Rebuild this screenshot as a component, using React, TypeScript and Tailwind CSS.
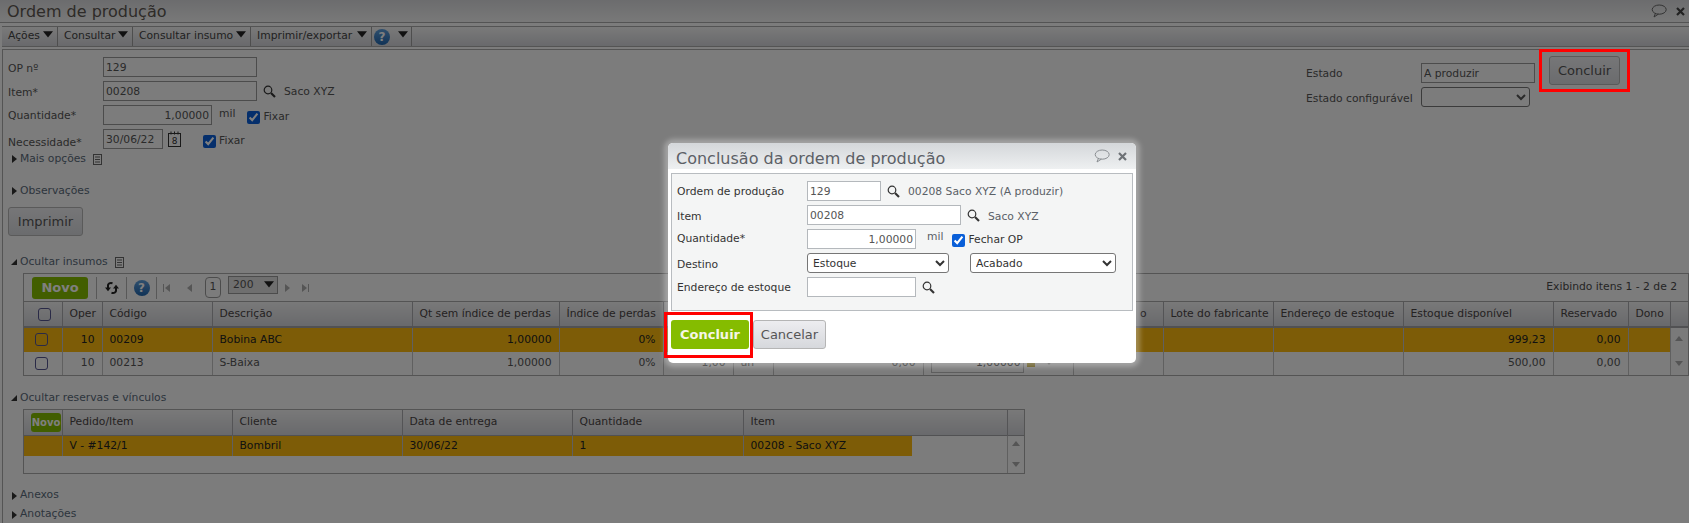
import React from 'react'

const SearchIcon = ({ cls = 'text-[#333]' }: { cls?: string }) => (
  <svg width="13" height="13" viewBox="0 0 13 13" className={cls} fill="none" stroke="currentColor">
    <circle cx="5" cy="5" r="3.8" strokeWidth="1.2" />
    <path d="M8 8l4 4" strokeWidth="2.2" />
  </svg>
)

const Caret = ({ dir = 'down', cls = 'text-[#444]', s = 8 }: { dir?: string; cls?: string; s?: number }) => {
  const d = dir === 'down' ? 'M0 1h8L4 6z' : dir === 'right' ? 'M2 0l5 4-5 4z' : dir === 'left' ? 'M6 0L1 4l5 4z' : dir === 'up' ? 'M0 6h8L4 1z' : 'M7 1v6H1z'
  return (
    <svg width={s} height={s} viewBox="0 0 8 8" className={`shrink-0 ${cls}`} fill="currentColor">
      <path d={d} />
    </svg>
  )
}

const HelpIcon = () => (
  <span className="flex h-[16px] w-[16px] shrink-0 items-center justify-center rounded-full bg-gradient-to-b from-[#5f9fdc] to-[#1f66ad] text-[12px] font-bold leading-none text-white">?</span>
)

const DocIcon = () => (
  <svg width="9" height="11" viewBox="0 0 9 11" className="text-[#666]" fill="none" stroke="currentColor">
    <rect x="0.5" y="0.5" width="8" height="10" />
    <path d="M2 3h5M2 5.5h5M2 8h5" />
  </svg>
)

const ChatIcon = ({ cls }: { cls: string }) => (
  <svg width="16" height="14" viewBox="0 0 16 14" className={cls} fill="none" stroke="currentColor">
    <ellipse cx="8.2" cy="5.6" rx="7" ry="4.6" />
    <path d="M4.5 9.2L3 13l4.4-2.9" />
  </svg>
)

const CloseIcon = ({ cls }: { cls: string }) => (
  <svg width="9" height="9" viewBox="0 0 9 9" className={cls} fill="none" stroke="currentColor" strokeWidth="2.2">
    <path d="M1 1l7 7M8 1L1 8" />
  </svg>
)

const CalendarIcon = () => (
  <svg width="13" height="16" viewBox="0 0 13 16" className="text-[#333]" fill="none" stroke="currentColor">
    <rect x="0.5" y="2.5" width="12" height="13" />
    <path d="M3 0.5v3M6.5 0.5v3M10 0.5v3" />
    <text x="6.5" y="13" fontSize="9" textAnchor="middle" fill="currentColor" stroke="none">8</text>
  </svg>
)

const SyncIcon = () => (
  <svg width="16" height="14" viewBox="0 0 16 14" className="text-[#222]" fill="none" stroke="currentColor" strokeWidth="2">
    <path d="M4 3.5v3.5M8.5 2.2C6 1.4 4 2.5 4 4.5" />
    <path d="M12 10.5V7M7.5 11.8c2.5.8 4.5-.3 4.5-2.3" />
    <path d="M1 6.5h6L4 10.2zM9 7.5h6L12 3.8z" fill="currentColor" stroke="none" />
  </svg>
)

const Fixar = ({ label = 'Fixar' }: { label?: string }) => (
  <label className="flex items-center gap-[3px]">
    <input type="checkbox" defaultChecked className="m-0 h-[13px] w-[13px] accent-[#0a5fd8]" />
    <span>{label}</span>
  </label>
)

const Section = ({ label, open, doc, cls = '' }: { label: string; open?: boolean; doc?: boolean; cls?: string }) => (
  <div className={`flex h-[14px] items-center ${cls}`}>
    <Caret dir={open ? 'open' : 'right'} cls="text-[#333]" />
    <span className="ml-[2px] text-[#5a6a7a]">{label}</span>
    {doc && <span className="ml-[7px] flex"><DocIcon /></span>}
  </div>
)

const FormRow = ({ label, labelCls, children }: { label: string; labelCls: string; children: React.ReactNode }) => (
  <div className="flex h-[20px] items-center">
    <span className={`w-[95px] shrink-0 ${labelCls}`}>{label}</span>
    {children}
  </div>
)

const inputCls = 'h-[20px] border border-[#999] bg-transparent px-[2px] text-[10.75px] leading-none text-[#555] outline-none'
const modalInput = 'h-[20px] border border-[#b4b8bc] bg-white px-[2px] text-[10.75px] leading-none text-[#555] outline-none'
const greyBtn = 'flex items-center justify-center rounded-[3px] border border-[#b5b5b5] bg-gradient-to-b from-[#ededf0] to-[#d6d8dc] text-[13px] text-[#555]'
const thCls = 'h-[25px] border-r border-[#a9a9ad] bg-gradient-to-b from-[#f2f2f2] to-[#d2d3d8] px-[7px] text-left font-normal whitespace-nowrap text-[#4a4444]'
const tdCls = 'border-r border-[#c0c0c0] px-[7px] whitespace-nowrap'

const tableCheck = 'm-0 block h-[13px] w-[13px] appearance-none rounded-[3px] border border-[#55558f] bg-transparent'

function MenuItem({ label, w }: { label: string; w: string }) {
  return (
    <div className={`flex h-full items-center justify-between border-r border-[#9c9c9c] pl-[6px] pr-[4px] ${w}`}>
      <span>{label}</span>
      <span className="-mt-[4px] flex"><Caret cls="text-[#222]" s={10} /></span>
    </div>
  )
}

function InsumosTable() {
  return (
    <div className="ml-[20px] border border-[#a8a8a8]">
      <div className="flex h-[28px] items-center justify-between border-b border-[#a8a8a8] pr-[11px]">
        <div className="flex h-full items-center">
          <div className="ml-[8px] flex h-[22px] w-[56px] items-center justify-center rounded-[3px] bg-[#85bc00] text-[13px] font-bold text-white">Novo</div>
          <span className="ml-[8px] h-[22px] w-px bg-[#b0b0b0]" />
          <span className="flex w-[29px] justify-center"><SyncIcon /></span>
          <span className="h-[22px] w-px bg-[#b0b0b0]" />
          <span className="flex w-[29px] justify-center"><HelpIcon /></span>
          <span className="h-[22px] w-px bg-[#b0b0b0]" />
          <span className="ml-[6px] flex w-[18px] items-center"><span className="h-[8px] w-[1px] bg-[#aaa]" /><Caret dir="left" cls="text-[#aaa]" /></span>
          <span className="ml-[5px]"><Caret dir="left" cls="text-[#aaa]" /></span>
          <span className="ml-[11px] flex h-[21px] w-[16px] items-center justify-center rounded-[4px] border border-[#999]">1</span>
          <div className="ml-[7px] mt-[2px] flex h-[18px] w-[50px] items-center justify-between self-start border border-[#999] bg-[#dedede] pl-[4px] pr-[3px]">
            <span>200</span>
            <Caret cls="text-[#222]" s={10} />
          </div>
          <span className="ml-[5px]"><Caret dir="right" cls="text-[#aaa]" /></span>
          <span className="ml-[9px] flex items-center"><Caret dir="right" cls="text-[#aaa]" /><span className="h-[8px] w-[1px] bg-[#aaa]" /></span>
        </div>
        <span className="text-[#4a4a4a]">Exibindo itens 1 - 2 de 2</span>
      </div>
      <table className="w-full table-fixed">
        <colgroup>
          <col className="w-[38px]" /><col className="w-[40px]" /><col className="w-[110px]" /><col className="w-[200px]" /><col className="w-[147px]" />
          <col className="w-[104px]" /><col className="w-[70px]" /><col className="w-[40px]" /><col className="w-[150px]" /><col className="w-[150px]" />
          <col className="w-[90px]" /><col className="w-[110px]" /><col className="w-[130px]" /><col className="w-[150px]" /><col className="w-[75px]" />
          <col className="w-[42px]" /><col />
        </colgroup>
        <thead>
          <tr className="border-b-2 border-[#a2a2a6]">
            <th className={thCls}><input type="checkbox" className={`${tableCheck} ml-[7px]`} /></th>
            <th className={thCls}>Oper</th>
            <th className={thCls}>Código</th>
            <th className={thCls}>Descrição</th>
            <th className={thCls}>Qt sem índice de perdas</th>
            <th className={thCls}>Índice de perdas</th>
            <th className={thCls} />
            <th className={thCls} />
            <th className={thCls} />
            <th className={thCls} />
            <th className={`${thCls} pr-[16px] text-right`}>o</th>
            <th className={thCls}>Lote do fabricante</th>
            <th className={thCls}>Endereço de estoque</th>
            <th className={thCls}>Estoque disponível</th>
            <th className={thCls}>Reservado</th>
            <th className={thCls}>Dono</th>
            <th className={`${thCls} border-r-0`} />
          </tr>
        </thead>
        <tbody>
          <tr className="h-[24px] bg-[#fab90e] text-[#222]">
            <td className={tdCls}><input type="checkbox" className={`${tableCheck} ml-[4px]`} /></td>
            <td className={`${tdCls} text-right`}>10</td>
            <td className={tdCls}>00209</td>
            <td className={tdCls}>Bobina ABC</td>
            <td className={`${tdCls} text-right`}>1,00000</td>
            <td className={`${tdCls} text-right`}>0%</td>
            <td className={tdCls} />
            <td className={tdCls} />
            <td className={tdCls} />
            <td className={tdCls} />
            <td className={tdCls} />
            <td className={tdCls} />
            <td className={tdCls} />
            <td className={`${tdCls} text-right`}>999,23</td>
            <td className={`${tdCls} text-right`}>0,00</td>
            <td className={tdCls} />
            <td rowSpan={2} className="bg-[#f4f4f4] align-top">
              <div className="flex h-[47px] flex-col items-center justify-between py-[7px]">
                <Caret dir="up" cls="text-[#aaa]" />
                <Caret cls="text-[#aaa]" />
              </div>
            </td>
          </tr>
          <tr className="h-[23px] text-[#555]">
            <td className={tdCls}><input type="checkbox" className={`${tableCheck} ml-[4px]`} /></td>
            <td className={`${tdCls} text-right`}>10</td>
            <td className={tdCls}>00213</td>
            <td className={tdCls}>S-Baixa</td>
            <td className={`${tdCls} text-right`}>1,00000</td>
            <td className={`${tdCls} text-right`}>0%</td>
            <td className={`${tdCls} text-right`}>1,00</td>
            <td className={tdCls}>un</td>
            <td className={`${tdCls} text-right`}>0,00</td>
            <td className={tdCls}>
              <div className="flex items-center gap-[3px]">
                <span className="flex h-[19px] w-[93px] items-center justify-end border border-[#bbb] pr-[2px] text-[#222]">1,00000</span>
                <span className="h-[7px] w-[8px] rounded-t-full bg-[#b8a030]" />
                <span className="ml-[7px]"><Caret cls="text-[#aaa]" /></span>
              </div>
            </td>
            <td className={tdCls} />
            <td className={tdCls} />
            <td className={tdCls} />
            <td className={`${tdCls} text-right`}>500,00</td>
            <td className={`${tdCls} text-right`}>0,00</td>
            <td className={tdCls} />
          </tr>
        </tbody>
      </table>
    </div>
  )
}

function ReservasTable() {
  return (
    <div className="ml-[20px] w-[1002px] border border-[#a8a8a8]">
      <table className="w-full table-fixed">
        <colgroup>
          <col className="w-[38px]" /><col className="w-[170px]" /><col className="w-[170px]" /><col className="w-[170px]" /><col className="w-[171px]" />
          <col className="w-[169px]" /><col className="w-[95px]" /><col />
        </colgroup>
        <thead>
          <tr className="border-b border-[#a2a2a6]">
            <th className={`${thCls} px-0`}>
              <div className="mx-auto flex h-[19px] w-[30px] items-center justify-center rounded-[3px] bg-[#85bc00] text-[10px] font-bold text-white">Novo</div>
            </th>
            <th className={thCls}>Pedido/Item</th>
            <th className={thCls}>Cliente</th>
            <th className={thCls}>Data de entrega</th>
            <th className={thCls}>Quantidade</th>
            <th colSpan={2} className={thCls}>Item</th>
            <th className={`${thCls} border-r-0`} />
          </tr>
        </thead>
        <tbody>
          <tr className="h-[21px] text-[#222]">
            <td className={`${tdCls} bg-[#fab90e]`} />
            <td className={`${tdCls} bg-[#fab90e]`}>V - #142/1</td>
            <td className={`${tdCls} bg-[#fab90e]`}>Bombril</td>
            <td className={`${tdCls} bg-[#fab90e]`}>30/06/22</td>
            <td className={`${tdCls} bg-[#fab90e]`}>1</td>
            <td className="bg-[#fab90e] px-[7px] whitespace-nowrap">00208 - Saco XYZ</td>
            <td />
            <td rowSpan={2} className="border-l border-[#c0c0c0] align-top">
              <div className="flex h-[37px] flex-col items-center justify-between py-[4px]">
                <Caret dir="up" cls="text-[#aaa]" />
                <Caret cls="text-[#aaa]" />
              </div>
            </td>
          </tr>
          <tr className="h-[16px]">
            <td colSpan={7} />
          </tr>
        </tbody>
      </table>
    </div>
  )
}

function ConclusaoModal() {
  return (
    <div className="absolute left-[668px] top-[143px] z-30 h-[220px] w-[468px] rounded-[5px] bg-white shadow-[0_0_5px_4px_rgba(255,255,255,0.3)]">
      <div className="flex h-[26px] items-center justify-between rounded-t-[5px] bg-gradient-to-b from-[#d4d7da] to-[#eef0f1] pl-[8px] pr-[9px]">
        <span className="translate-y-[3px] text-[16px] text-[#5c6066]">Conclusão da ordem de produção</span>
        <div className="flex items-center gap-[8px]">
          <ChatIcon cls="text-[#8a8e92]" />
          <CloseIcon cls="text-[#6e7276]" />
        </div>
      </div>
      <div className="mx-[3px] mt-[4px] flex h-[138px] flex-col gap-[4px] border border-[#b8bcc0] bg-[#f4f5f5] pl-[5px] pt-[7px] text-[#333]">
        <div className="flex h-[20px] items-center">
          <span className="w-[130px] shrink-0 translate-y-[1px]">Ordem de produção</span>
          <input readOnly value="129" className={`${modalInput} w-[74px]`} />
          <span className="ml-[6px] flex"><SearchIcon /></span>
          <span className="ml-[8px] translate-y-[1px] text-[#5a6066]">00208 Saco XYZ (A produzir)</span>
        </div>
        <div className="flex h-[20px] items-center">
          <span className="w-[130px] shrink-0 translate-y-[2px]">Item</span>
          <input readOnly value="00208" className={`${modalInput} w-[154px]`} />
          <span className="ml-[6px] flex"><SearchIcon /></span>
          <span className="ml-[8px] translate-y-[2px] text-[#5a6066]">Saco XYZ</span>
        </div>
        <div className="flex h-[20px] items-center">
          <span className="w-[130px] shrink-0">Quantidade*</span>
          <input readOnly value="1,00000" className={`${modalInput} w-[109px] text-right text-[#333]`} />
          <span className="ml-[11px] -mt-[4px] text-[#5a6066]">mil</span>
          <span className="ml-[9px] translate-y-[1px]"><Fixar label="Fechar OP" /></span>
        </div>
        <div className="flex h-[20px] items-center">
          <span className="w-[130px] shrink-0 translate-y-[2px]">Destino</span>
          <select className="h-[20px] w-[142px] rounded-[3px] border border-[#767676] bg-white pl-[1px] text-[10.75px] text-[#333]"><option>Estoque</option></select>
          <select className="ml-[21px] h-[20px] w-[146px] rounded-[3px] border border-[#767676] bg-white pl-[1px] text-[10.75px] text-[#333]"><option>Acabado</option></select>
        </div>
        <div className="flex h-[20px] items-center">
          <span className="w-[130px] shrink-0 translate-y-[1px]">Endereço de estoque</span>
          <input readOnly className={`${modalInput} w-[109px]`} />
          <span className="ml-[6px] flex"><SearchIcon /></span>
        </div>
      </div>
      <div className="ml-[3px] mt-[9px] flex gap-[4px]">
        <div className="relative">
          <div className="flex h-[29px] w-[78px] items-center justify-center rounded-[3px] bg-[#85bc00] text-[13px] font-bold text-[#f6f6e6]">Concluir</div>
          <span className="absolute -bottom-[9px] -left-[7px] -right-[4px] -top-[8px] border-[3px] border-[#ff0000]" />
        </div>
        <div className={`${greyBtn} h-[29px] w-[73px]`}>Cancelar</div>
      </div>
    </div>
  )
}

export default function App() {
  return (
    <div className="relative h-[523px] w-[1689px] overflow-hidden bg-[#f8f8f8] font-['DejaVu_Sans',sans-serif] text-[10.75px] text-[#555]">
      <div className="flex h-[23px] items-center justify-between border-b border-[#a8a8a8] bg-gradient-to-b from-[#d8d9dc] to-[#f2f2f2] pl-[7px] pr-[4px]">
        <span className="translate-y-[1px] text-[16px] text-[#5c5650]">Ordem de produção</span>
        <div className="flex items-center gap-[9px]">
          <ChatIcon cls="text-[#666]" />
          <CloseIcon cls="text-[#444]" />
        </div>
      </div>
      <div className="ml-[2px] mt-[3px] flex h-[21px] items-stretch border-y border-[#a8a8a8] bg-gradient-to-b from-[#f4f4f4] to-[#d2d3d8] text-[#444]">
        <MenuItem label="Ações" w="w-[56px]" />
        <MenuItem label="Consultar" w="w-[75px]" />
        <MenuItem label="Consultar insumo" w="w-[118px]" />
        <MenuItem label="Imprimir/exportar" w="w-[121px]" />
        <div className="flex w-[40px] items-center justify-between border-r border-[#9c9c9c] pl-[2px] pr-[3px]">
          <HelpIcon />
          <span className="-mt-[4px] flex"><Caret cls="text-[#222]" s={10} /></span>
        </div>
      </div>
      <div className="ml-[2px] mt-[2px] h-[480px] border-l border-t border-[#a8a8a8] pl-[5px] pt-[7px]">
        <div className="flex items-start justify-between pr-[69px]">
          <div className="flex flex-col gap-[4px]">
            <FormRow label="OP nº" labelCls="translate-y-[2px]"><input readOnly value="129" className={`${inputCls} w-[154px]`} /></FormRow>
            <FormRow label="Item*" labelCls="translate-y-[2px]">
              <input readOnly value="00208" className={`${inputCls} w-[154px]`} />
              <span className="ml-[6px] flex"><SearchIcon /></span>
              <span className="ml-[8px] translate-y-[1px]">Saco XYZ</span>
            </FormRow>
            <FormRow label="Quantidade*" labelCls="translate-y-[1px]">
              <input readOnly value="1,00000" className={`${inputCls} w-[109px] text-right text-[#333]`} />
              <span className="ml-[7px] -mt-[2px]">mil</span>
              <span className="ml-[12px] translate-y-[2px]"><Fixar /></span>
            </FormRow>
            <FormRow label="Necessidade*" labelCls="translate-y-[4px]">
              <input readOnly value="30/06/22" className={`${inputCls} w-[60px] text-[#333]`} />
              <span className="ml-[5px] flex"><CalendarIcon /></span>
              <span className="ml-[22px] translate-y-[2px]"><Fixar /></span>
            </FormRow>
          </div>
          <div className="flex items-start">
            <div className="mt-[6px] flex flex-col gap-[4px]">
              <div className="flex h-[20px] items-center">
                <span className="w-[115px] translate-y-[1px]">Estado</span>
                <input readOnly value="A produzir" className={`${inputCls} w-[114px] text-[#5a6066]`} />
              </div>
              <div className="flex h-[20px] items-center">
                <span className="w-[115px] translate-y-[2px] whitespace-nowrap">Estado configurável</span>
                <select className="h-[20px] w-[109px] rounded-[3px] border border-[#767676] bg-transparent" />
              </div>
            </div>
            <div className="relative -mt-[1px] ml-[14px]">
              <div className={`${greyBtn} h-[29px] w-[71px]`}>Concluir</div>
              <span className="absolute -inset-x-[10px] -inset-y-[7px] z-30 border-[3px] border-[#ff0000]" />
            </div>
          </div>
        </div>
        <Section label="Mais opções" doc cls="ml-[2px] mt-[3px]" />
        <Section label="Observações" cls="ml-[2px] mt-[18px]" />
        <div className={`${greyBtn} mt-[9px] h-[29px] w-[75px]`}>Imprimir</div>
        <Section label="Ocultar insumos" open doc cls="ml-[2px] mt-[19px]" />
        <div className="-ml-[5px] mt-[4px]"><InsumosTable /></div>
        <Section label="Ocultar reservas e vínculos" open cls="ml-[2px] mt-[15px]" />
        <div className="-ml-[5px] mt-[4px]"><ReservasTable /></div>
        <Section label="Anexos" cls="ml-[2px] mt-[15px]" />
        <Section label="Anotações" cls="ml-[2px] mt-[5px]" />
      </div>
      <div className="absolute inset-0 z-20 bg-black/50" />
      <ConclusaoModal />
    </div>
  )
}
